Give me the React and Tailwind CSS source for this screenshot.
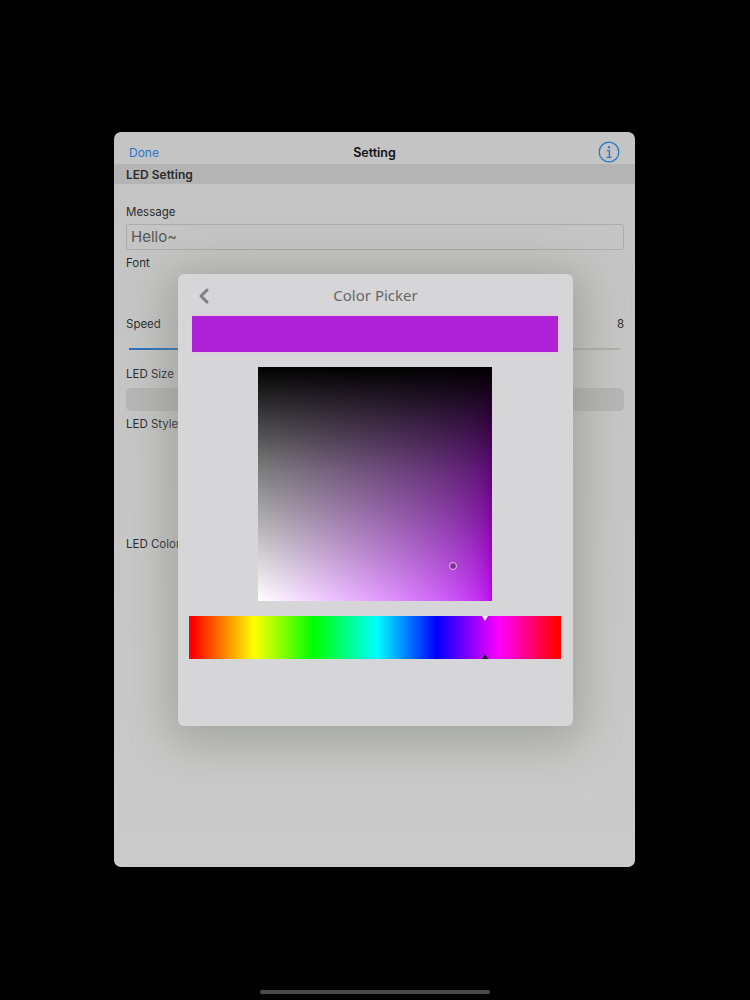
import { ChevronLeft } from 'lucide-react'

function Label({ children, className = '' }) {
  return <p className={`px-3 text-[11.5px] leading-[16px] text-[#2b2b2b] ${className}`}>{children}</p>
}

function ColorPicker() {
  return (
    <div className="absolute left-[64px] top-[142px] flex h-[452px] w-[395px] flex-col rounded-[6px] bg-[#d6d6d8] shadow-[0_8px_46px_10px_rgba(125,130,120,0.5)]">
      <div className="relative flex h-[42px] items-center justify-center">
        <ChevronLeft className="absolute left-[14px] top-[10px] h-[24px] w-[24px] text-[#808082]" strokeWidth={3} />
        <span className="font-['Noto_Sans'] text-[15px] text-[#666668]">Color Picker</span>
      </div>
      <div className="mx-[14px] h-[36px] w-[366px] bg-[#b022d8] shadow-[0_0_2px_#f0b0f0]" />
      <div className="relative ml-[80px] mt-[15px] h-[234px] w-[234px] bg-linear-to-r from-white to-[#c000f2]">
        <div className="absolute inset-0 bg-linear-to-b from-black via-black/50 via-45% to-transparent" />
        <div className="absolute left-[191px] top-[195px] h-[8px] w-[8px] rounded-full border border-[#f0c0f5] bg-[#80309a]" />
      </div>
      <div className="relative mx-[11px] mt-[15px] h-[43px] w-[372px] bg-[linear-gradient(to_right,#f00_1%,#ff0_17.5%,#0f0_33.5%,#0ff_50.5%,#00f_66.5%,#f0f_83.5%,#f00_99%)]">
        <div className="absolute left-[293px] top-0 h-0 w-0 border-x-[3.5px] border-t-[5px] border-x-transparent border-t-[#f8f0f8]" />
        <div className="absolute bottom-0 left-[293px] h-0 w-0 border-x-[3.5px] border-b-[5px] border-x-transparent border-b-[#201028]" />
      </div>
    </div>
  )
}

export default function App() {
  return (
    <div className="flex h-[1000px] flex-col items-center overflow-hidden bg-black pt-[132px] font-['Inter',sans-serif]">
      <div className="relative mr-[1px] h-[735px] w-[521px] rounded-[7px] bg-linear-to-b from-[#c4c4c4] to-[#cbcbcb]">
        <div className="relative flex h-[32px] items-center justify-center">
          <span className="absolute left-[15px] top-[13px] text-[12px] leading-[15px] text-[#2a76c6]">Done</span>
          <span className="mt-[10px] text-[12.5px] font-semibold text-[#111]">Setting</span>
          <svg className="absolute right-[15px] top-[9px] h-[22px] w-[22px]" viewBox="0 0 22 22" fill="none" stroke="#2a76c6">
            <circle cx="11" cy="11" r="9.8" strokeWidth="1.3" />
            <circle cx="11" cy="6.2" r="1.2" fill="#2a76c6" stroke="none" />
            <path d="M8.8 9.6H11.4V16.2M8.6 16.4H13.6" strokeWidth="1.4" />
          </svg>
        </div>
        <div className="flex h-[20px] items-center bg-[#b5b4b4] px-3 pt-[1px] text-[12px] font-semibold text-[#2b2b2b]">LED Setting</div>
        <Label className="mt-[20px]">Message</Label>
        <div className="ml-3 mr-[11px] mt-[4px] flex h-[26px] items-center rounded-[3px] border border-[#a9adab] px-1 text-[15px] text-[#555]">Hello~</div>
        <Label className="mt-[5px]">Font</Label>
        <div className="mt-[45px] flex justify-between pr-[11px]">
          <Label>Speed</Label>
          <span className="text-[11.5px] leading-[16px] text-[#2b2b2b]">8</span>
        </div>
        <div className="mx-[15px] mt-[16px] h-[2px] bg-[#aeb0ae]">
          <div className="h-[2px] w-[60px] bg-[#2a6fc0]" />
        </div>
        <Label className="mt-[16px]">LED Size</Label>
        <div className="ml-3 mr-[11px] mt-[6px] h-[23px] rounded-[5px] bg-[#b6b6b6]" />
        <Label className="mt-[5px]">LED Style</Label>
        <Label className="mt-[104px]">LED Color</Label>
        <ColorPicker />
      </div>
      <div className="mt-[123px] h-[4px] w-[230px] rounded-full bg-[#4a4a4c]" />
    </div>
  )
}
